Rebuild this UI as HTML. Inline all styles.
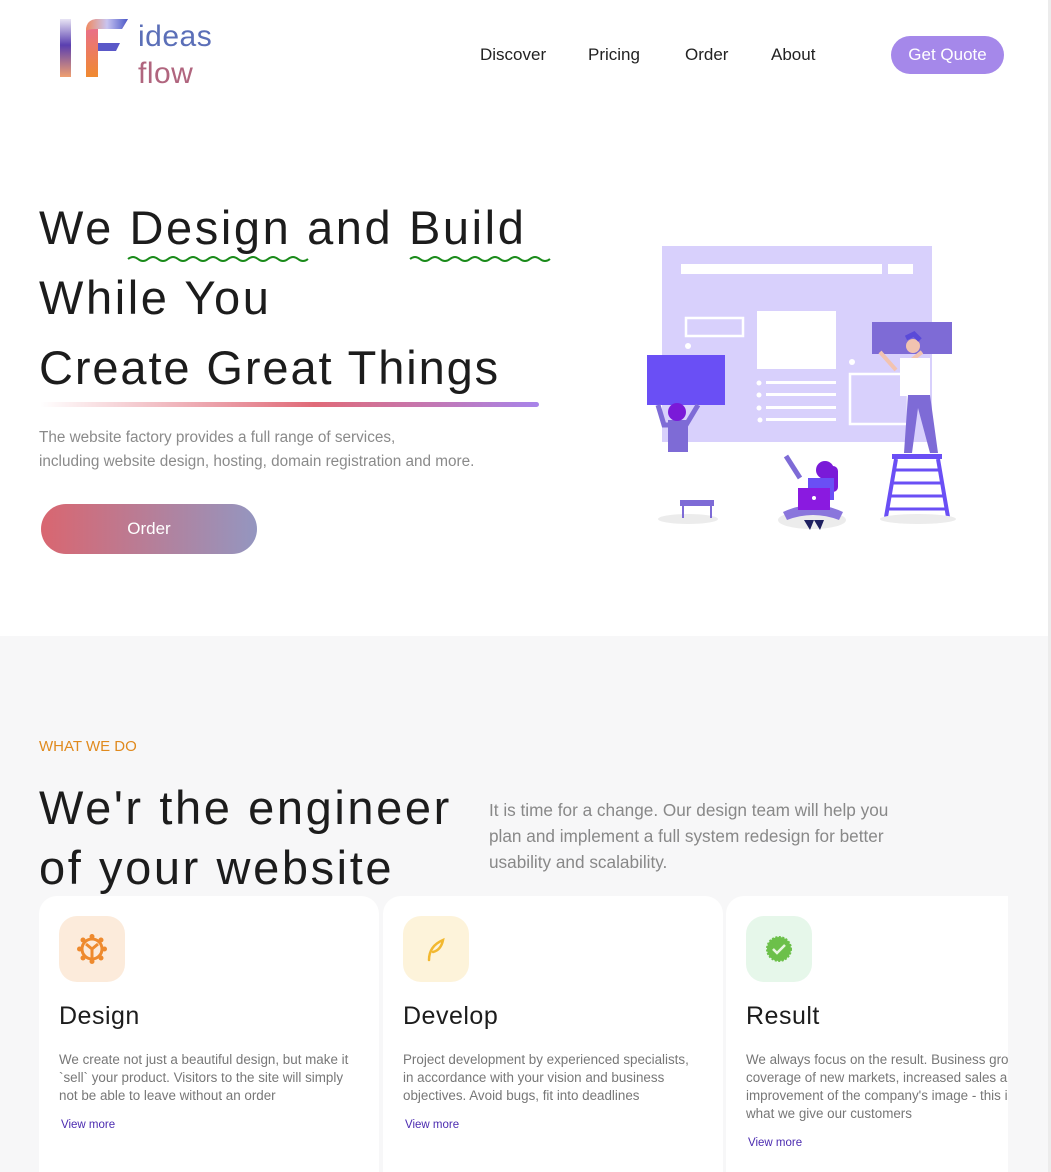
<!DOCTYPE html>
<html><head><meta charset="utf-8"><style>
*{margin:0;padding:0;box-sizing:border-box}
body{width:1051px;height:1172px;overflow:hidden;font-family:"Liberation Sans",sans-serif;background:#fff;position:relative;color:#1e1e1e}
.a{position:absolute}
.nav{font-size:17px;color:#222;top:45px}
.h1{font-size:47px;letter-spacing:2.6px;left:39px;white-space:nowrap;color:#1c1c1c}
.sec{top:636px;left:0;width:1048px;height:536px;background:#f7f7f8}
.card{background:#fff;border-radius:18px;top:896px;width:340px;height:300px}
.ic{width:66px;height:66px;border-radius:18px;left:20px;top:20px;display:flex;align-items:center;justify-content:center}
.ct{left:20px;top:106px;font-size:25px;color:#1c1c1c;letter-spacing:.5px}
.cp{left:20px;top:155px;font-size:13.4px;line-height:18px;color:#777;white-space:nowrap}
.vm{left:22px;font-size:11.5px;color:#4b2bb0}
</style></head><body>
<div class="a" style="right:0;top:0;width:3px;height:1172px;background:#ececec"></div>
<svg class="a" style="left:58px;top:17px" width="72" height="62" viewBox="0 0 72 62">
<defs>
<linearGradient id="l1" x1="0" y1="0" x2="0" y2="1"><stop offset="0" stop-color="#e8e4f4"/><stop offset=".45" stop-color="#5a3fb0"/><stop offset="1" stop-color="#f0a070"/></linearGradient>
<linearGradient id="l2" x1="0" y1="0" x2="1" y2="0"><stop offset="0" stop-color="#f08a60"/><stop offset=".5" stop-color="#c8c4f0"/><stop offset="1" stop-color="#4a58c8"/></linearGradient>
<linearGradient id="l3" x1="0" y1="0" x2="0" y2="1"><stop offset="0" stop-color="#e86a9a"/><stop offset="1" stop-color="#f08a30"/></linearGradient>
</defs>
<rect x="2" y="2" width="11" height="58" fill="url(#l1)"/>
<path d="M28 60V14Q28 2 40 2H70L64 12H40V60Z" fill="url(#l3)"/>
<path d="M28 14Q28 2 40 2H70L64 12H40Q30 12 28 14Z" fill="url(#l2)"/>
<path d="M40 26H62L58 34H40Z" fill="#5a58c8"/>
</svg>
<div class="a" style="left:138px;top:20px;font-size:30px;color:#5b6fb8;letter-spacing:.5px">ideas</div>
<div class="a" style="left:138px;top:57px;font-size:30px;color:#b0657e;letter-spacing:.5px">flow</div>
<div class="a nav" style="left:480px">Discover</div>
<div class="a nav" style="left:588px">Pricing</div>
<div class="a nav" style="left:685px">Order</div>
<div class="a nav" style="left:771px">About</div>
<div class="a" style="left:891px;top:36px;width:113px;height:38px;border-radius:19px;background:#a588ea;color:#fff;font-size:17px;text-align:center;line-height:38px">Get Quote</div>
<div class="a h1" style="top:200px">We Design and Build</div>
<div class="a h1" style="top:270px">While You</div>
<div class="a h1" style="top:340px;letter-spacing:1.9px">Create Great Things</div>
<svg class="a" style="left:0;top:0" width="600" height="420">
<defs><linearGradient id="ul" x1="0" x2="1"><stop offset="0" stop-color="#fff"/><stop offset=".55" stop-color="#e06a78"/><stop offset="1" stop-color="#a884ea"/></linearGradient></defs>
<path d="M128 259q5-4 10 0t10 0t10 0t10 0t10 0t10 0t10 0t10 0t10 0t10 0t10 0t10 0t10 0t10 0t10 0t10 0t10 0t10 0" stroke="#1a8a1a" stroke-width="2" fill="none"/>
<path d="M410 259q5-4 10 0t10 0t10 0t10 0t10 0t10 0t10 0t10 0t10 0t10 0t10 0t10 0t10 0t10 0" stroke="#1a8a1a" stroke-width="2" fill="none"/>
<rect x="40" y="402" width="499" height="5" rx="2.5" fill="url(#ul)"/>
</svg>
<div class="a" style="left:39px;top:426px;font-size:15.3px;line-height:24px;color:#8a8a8a;white-space:nowrap">The website factory provides a full range of services,<br>including website design, hosting, domain registration and more.</div>
<div class="a" style="left:41px;top:504px;width:216px;height:50px;border-radius:25px;background:linear-gradient(90deg,#d96670,#9496c0);color:#fff;font-size:17px;text-align:center;line-height:50px">Order</div>
<svg class="a" style="left:630px;top:230px" width="340" height="310" viewBox="0 0 340 310">
<rect x="32" y="16" width="270" height="196" fill="#d8d0fc"/>
<rect x="51" y="34" width="201" height="10" fill="#fff"/><rect x="258" y="34" width="25" height="10" fill="#fff"/>
<rect x="56" y="88" width="57" height="18" fill="none" stroke="#fff" stroke-width="2.5"/>
<rect x="127" y="81" width="79" height="58" fill="#fff"/>
<circle cx="58" cy="116" r="3" fill="#fff"/><circle cx="222" cy="132" r="3" fill="#fff"/>
<g fill="#fff"><circle cx="129" cy="153" r="2.5"/><circle cx="129" cy="165" r="2.5"/><circle cx="129" cy="178" r="2.5"/><circle cx="130" cy="190" r="2.5"/>
<rect x="136" y="151" width="70" height="3"/><rect x="136" y="163" width="70" height="3"/><rect x="136" y="176" width="70" height="3"/><rect x="136" y="188" width="70" height="3"/></g>
<rect x="220" y="144" width="58" height="50" fill="none" stroke="#fff" stroke-width="2.5"/>
<rect x="17" y="125" width="78" height="50" fill="#6a4ff5"/>
<path d="M28 175l6 20h22l12-20" stroke="#7e6bd6" stroke-width="5" fill="none"/>
<rect x="38" y="190" width="20" height="32" fill="#7e6bd6"/>
<circle cx="47" cy="182" r="9" fill="#7a1ad8"/>
<rect x="242" y="92" width="80" height="32" fill="#7e6bd6"/>
<path d="M250 122l16 18M292 122l-18 14" stroke="#f2c3b0" stroke-width="4"/>
<rect x="270" y="128" width="30" height="38" fill="#fff"/><circle cx="283" cy="116" r="7" fill="#f2c3b0"/><path d="M276 108l8-4 6 6" stroke="#5a4ad8" stroke-width="5" fill="none"/>
<path d="M278 165l-4 58h8l6-45 12 45h8l-8-58z" fill="#7e6bd6"/>
<rect x="262" y="224" width="50" height="5" fill="#6a4ff5"/>
<path d="M266 229l-10 58M308 229l10 58" stroke="#6a4ff5" stroke-width="4"/>
<g stroke="#6a4ff5" stroke-width="3"><path d="M264 240h46M262 253h50M260 266h54M258 279h58"/></g>
<ellipse cx="288" cy="289" rx="38" ry="5" fill="#ececec"/>
<ellipse cx="58" cy="289" rx="30" ry="5" fill="#ececec"/>
<rect x="50" y="270" width="34" height="6" fill="#7e6bd6"/><path d="M53 276v12M81 276v12" stroke="#7e6bd6" stroke-width="2"/>
<ellipse cx="182" cy="290" rx="34" ry="9" fill="#ececec"/>
<path d="M156 226l14 22" stroke="#7e6bd6" stroke-width="5"/>
<circle cx="195" cy="240" r="9" fill="#7a1ad8"/><rect x="198" y="236" width="10" height="26" rx="5" fill="#7a1ad8"/>
<rect x="178" y="248" width="26" height="22" fill="#6a4ff5"/>
<path d="M153 282q30-14 60 0l-4 8q-26-10-52 0z" fill="#8a76dc"/>
<rect x="168" y="258" width="32" height="22" fill="#8a1ae0"/><circle cx="184" cy="268" r="2" fill="#fff"/>
<path d="M174 290l6 10 4-10 6 10 4-10" fill="#1e2060"/>
</svg>
<div class="a sec"></div>
<div class="a" style="left:39px;top:738px;font-size:15px;color:#e08a1e">WHAT WE DO</div>
<div class="a" style="left:39px;top:778px;font-size:47px;line-height:60px;color:#1c1c1c;letter-spacing:2.6px;white-space:nowrap">We'r the engineer<br>of your website</div>
<div class="a" style="left:489px;top:797px;font-size:17.2px;line-height:26px;color:#888;white-space:nowrap">It is time for a change. Our design team will help you<br>plan and implement a full system redesign for better<br>usability and scalability.</div>
<div class="a" style="left:0;top:890px;width:1008px;height:282px;overflow:hidden">
<div class="a card" style="left:39px;top:6px">
<div class="a ic" style="background:#fcebdb"><svg width="32" height="32" viewBox="0 0 32 32"><g fill="none" stroke="#ee8a2e" stroke-width="3"><circle cx="16" cy="16" r="10"/><path d="M16 16l-6-5M16 16l6-5M16 16v9"/></g><g fill="#ee8a2e"><circle cx="16" cy="3.5" r="2.5"/><circle cx="16" cy="28.5" r="2.5"/><circle cx="3.5" cy="16" r="2.5"/><circle cx="28.5" cy="16" r="2.5"/><circle cx="7" cy="7" r="2.5"/><circle cx="25" cy="7" r="2.5"/><circle cx="7" cy="25" r="2.5"/><circle cx="25" cy="25" r="2.5"/></g></svg></div>
<div class="a ct">Design</div>
<div class="a cp">We create not just a beautiful design, but make it<br>`sell` your product. Visitors to the site will simply<br>not be able to leave without an order</div>
<div class="a vm" style="top:223px">View more</div></div>
<div class="a card" style="left:383px;top:6px">
<div class="a ic" style="background:#fdf3da"><svg width="32" height="32" viewBox="0 0 32 32"><path d="M9 27q0-14 14-20-2 10-10 12" fill="none" stroke="#f2b830" stroke-width="2.5" stroke-linecap="round"/></svg></div>
<div class="a ct">Develop</div>
<div class="a cp">Project development by experienced specialists,<br>in accordance with your vision and business<br>objectives. Avoid bugs, fit into deadlines</div>
<div class="a vm" style="top:223px">View more</div></div>
<div class="a card" style="left:726px;top:6px">
<div class="a ic" style="background:#e6f7ea"><svg width="32" height="32" viewBox="0 0 32 32"><circle cx="16" cy="16" r="12" fill="#6cc04a" stroke="#6cc04a" stroke-width="2" stroke-dasharray="2 1.5"/><path d="M10 16l4 4 8-8" fill="none" stroke="#e8f7e0" stroke-width="2.5"/></svg></div>
<div class="a ct">Result</div>
<div class="a cp">We always focus on the result. Business growth,<br>coverage of new markets, increased sales and<br>improvement of the company's image - this is<br>what we give our customers</div>
<div class="a vm" style="top:241px">View more</div></div>
</div>
</body></html>
